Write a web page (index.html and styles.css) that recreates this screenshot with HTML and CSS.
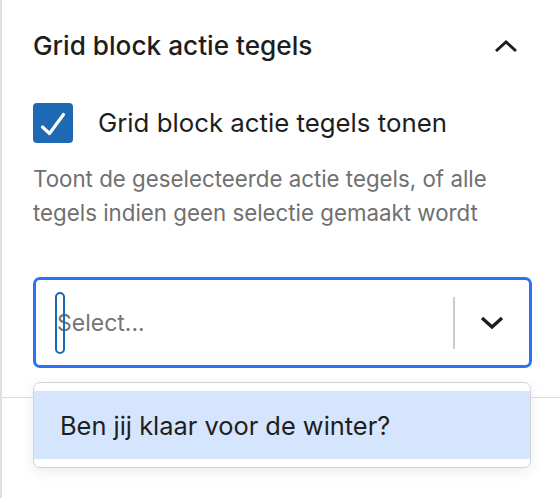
FILE: index.html
```html
<!DOCTYPE html>
<html lang="nl">
<head>
<meta charset="utf-8">
<title>Grid block actie tegels</title>
<link rel="stylesheet" href="styles.css">
</head>
<body>
<div class="sidebar">
  <section class="panel">
    <div class="panel-header">
      <h2 class="panel-title">Grid block actie tegels</h2>
      <svg class="chevron-up" width="24" height="14" viewBox="0 0 24 14" aria-hidden="true">
        <path d="M2 12 L12 3 L22 12" fill="none" stroke="#1e1e1e" stroke-width="3"/>
      </svg>
    </div>
    <label class="check-row">
      <span class="checkbox">
        <svg width="40" height="40" viewBox="0 0 40 40" aria-hidden="true">
          <path d="M9.5 24 L16.5 30.5 L30.5 11.5" fill="none" stroke="#fff" stroke-width="3.2" stroke-linecap="round" stroke-linejoin="round"/>
        </svg>
      </span>
      <span class="check-label">Grid block actie tegels tonen</span>
    </label>
    <p class="help">Toont de geselecteerde actie tegels, of alle tegels indien geen selectie gemaakt wordt</p>
    <div class="select">
      <div class="select-value">
        <span class="caret"></span>
        <span class="placeholder">Select...</span>
      </div>
      <span class="separator"></span>
      <span class="indicator">
        <svg width="26" height="16" viewBox="0 0 26 16" aria-hidden="true">
          <path d="M3 3 L13 12 L23 3" fill="none" stroke="#1e1e1e" stroke-width="3.4"/>
        </svg>
      </span>
    </div>
  </section>
  <div class="menu">
    <div class="option">Ben jij klaar voor de winter?</div>
  </div>
</div>
</body>
</html>
```
FILE: styles.css
```css
html, body {
  margin: 0;
  padding: 0;
  background: #fff;
}
body {
  font-family: Inter, "Noto Sans", "Liberation Sans", sans-serif;
  color: #1e1e1e;
  width: 560px;
  height: 498px;
  overflow: hidden;
}
.sidebar {
  position: relative;
  height: 498px;
  border-left: 2px solid #e0e0e0;
  box-sizing: border-box;
}
.panel {
  border-bottom: 1px solid #dddddd;
  height: 398px;
  box-sizing: border-box;
  padding: 0 28px 0 31px;
}
.panel-header {
  display: flex;
  align-items: center;
  justify-content: space-between;
  height: 92px;
  padding-right: 14px;
}
.panel-title {
  margin: 0;
  font-size: 26.2px;
  font-weight: 500;
  line-height: 40px;
}
.chevron-up {
  display: block;
}
.check-row {
  display: flex;
  align-items: center;
  gap: 25px;
  margin-top: 11px;
}
.checkbox {
  width: 40px;
  height: 40px;
  border-radius: 4px;
  background: #1d69b4;
  display: block;
  flex: none;
}
.checkbox svg {
  display: block;
}
.check-label {
  font-size: 25.8px;
  line-height: 40px;
}
.help {
  margin: 19px 0 0;
  font-size: 22.3px;
  line-height: 34px;
  color: #707070;
}
.select {
  margin-top: 47px;
  height: 91px;
  box-sizing: border-box;
  border: 3px solid #2a72f8;
  border-radius: 7px;
  display: flex;
  align-items: center;
  padding: 0 0 0 19px;
}
.select-value {
  position: relative;
  flex: 1;
  display: flex;
  align-items: center;
  height: 62px;
}
.caret {
  position: absolute;
  left: 0;
  top: 0;
  width: 10px;
  height: 62px;
  box-sizing: border-box;
  border: 2px solid #1a67b8;
  border-radius: 6px;
}
.placeholder {
  font-size: 23px;
  color: #757575;
  padding-left: 2px;
}
.separator {
  width: 2px;
  height: 52px;
  background: #cccccc;
}
.indicator {
  width: 74px;
  display: flex;
  justify-content: center;
  align-items: center;
}
.indicator svg {
  display: block;
}
.menu {
  position: absolute;
  top: 382px;
  left: 31px;
  width: 498px;
  height: 86px;
  box-sizing: border-box;
  border: 1px solid #d4d4d4;
  border-radius: 7px;
  background: #fff;
  box-shadow: 0 4px 14px rgba(0, 0, 0, 0.08);
  padding: 8px 0;
}
.option {
  height: 68px;
  background: #d5e5fd;
  display: flex;
  align-items: center;
  padding-left: 26px;
  font-size: 25.4px;
  color: #1e1e1e;
}
```
